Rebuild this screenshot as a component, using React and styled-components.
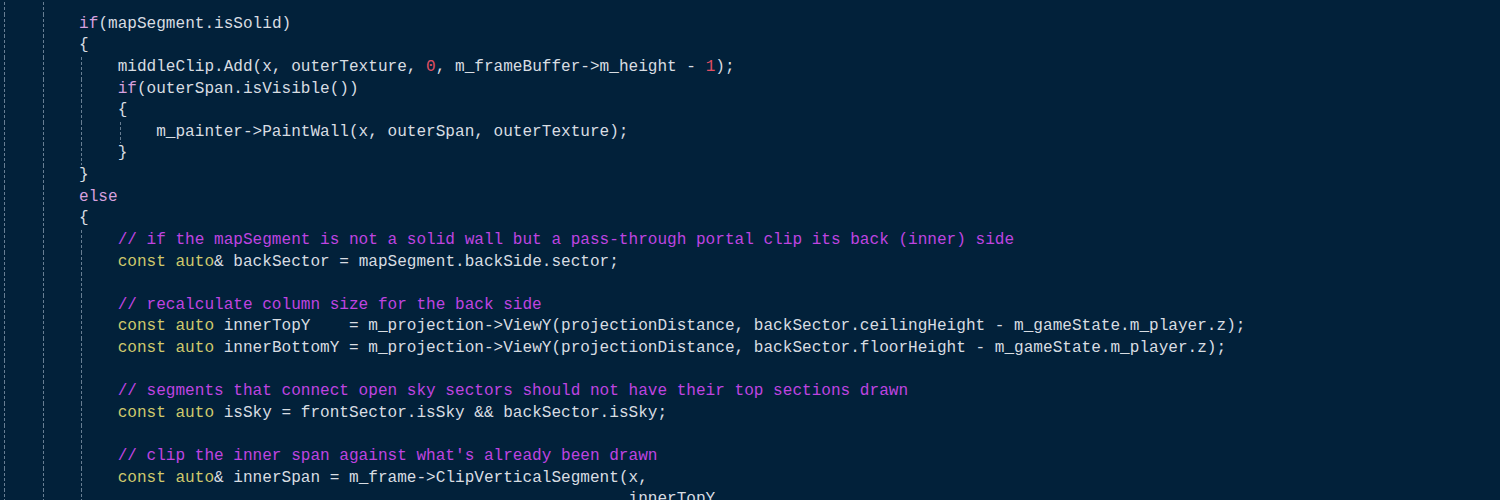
import React from 'react';
import styled, { createGlobalStyle } from 'styled-components';

const Global = createGlobalStyle`
  html, body { margin: 0; padding: 0; background: #02213a; }
  body { width: 1500px; height: 500px; overflow: hidden; }
`;

const Editor = styled.div`
  width: 1500px;
  height: 500px;
  overflow: hidden;
  background: #02213a;
  box-sizing: border-box;
  padding-left: 2px;
  font-family: "Liberation Mono", "DejaVu Sans Mono", monospace;
  font-size: 16.07px;
  color: #d8dde2;
`;

const Lines = styled.div`
  margin-top: -8px;
  display: flex;
  flex-direction: column;
`;

const Row = styled.div`
  display: flex;
  height: 21.64px;
  line-height: 21.64px;
  white-space: pre;
`;

const Indent = styled.span`
  flex: 0 0 4ch;
  width: 4ch;
  height: 100%;
  background: ${(p) =>
    p.$guide
      ? 'repeating-linear-gradient(to bottom, rgba(165, 182, 200, 0.62) 0 3px, transparent 3px 5px) 2px 0 / 1px 100% no-repeat'
      : 'none'};
`;

const colors = {
  kw: '#d7a0df',
  type: '#cfc96c',
  num: '#e04f63',
  cmt: '#bf44e0',
  plain: '#d8dde2',
};

const Tok = styled.span`
  color: ${(p) => colors[p.$kind] || colors.plain};
`;

const K = (t) => ['kw', t];
const T = (t) => ['type', t];
const N = (t) => ['num', t];
const C = (t) => ['cmt', t];
const P = (t) => ['plain', t];

const lines = [
  { units: 2, guides: 2, tokens: [] },
  { units: 2, guides: 2, tokens: [K('if'), P('(mapSegment.isSolid)')] },
  { units: 2, guides: 2, tokens: [P('{')] },
  {
    units: 3,
    guides: 3,
    tokens: [P('middleClip.Add(x, outerTexture, '), N('0'), P(', m_frameBuffer->m_height - '), N('1'), P(');')],
  },
  { units: 3, guides: 3, tokens: [K('if'), P('(outerSpan.isVisible())')] },
  { units: 3, guides: 3, tokens: [P('{')] },
  { units: 4, guides: 4, tokens: [P('m_painter->PaintWall(x, outerSpan, outerTexture);')] },
  { units: 3, guides: 3, tokens: [P('}')] },
  { units: 2, guides: 2, tokens: [P('}')] },
  { units: 2, guides: 2, tokens: [K('else')] },
  { units: 2, guides: 2, tokens: [P('{')] },
  {
    units: 3,
    guides: 3,
    tokens: [C('// if the mapSegment is not a solid wall but a pass-through portal clip its back (inner) side')],
  },
  {
    units: 3,
    guides: 3,
    tokens: [T('const'), P(' '), T('auto'), P('& backSector = mapSegment.backSide.sector;')],
  },
  { units: 3, guides: 3, tokens: [] },
  { units: 3, guides: 3, tokens: [C('// recalculate column size for the back side')] },
  {
    units: 3,
    guides: 3,
    tokens: [
      T('const'),
      P(' '),
      T('auto'),
      P(' innerTopY    = m_projection->ViewY(projectionDistance, backSector.ceilingHeight - m_gameState.m_player.z);'),
    ],
  },
  {
    units: 3,
    guides: 3,
    tokens: [
      T('const'),
      P(' '),
      T('auto'),
      P(' innerBottomY = m_projection->ViewY(projectionDistance, backSector.floorHeight - m_gameState.m_player.z);'),
    ],
  },
  { units: 3, guides: 3, tokens: [] },
  {
    units: 3,
    guides: 3,
    tokens: [C('// segments that connect open sky sectors should not have their top sections drawn')],
  },
  {
    units: 3,
    guides: 3,
    tokens: [T('const'), P(' '), T('auto'), P(' isSky = frontSector.isSky && backSector.isSky;')],
  },
  { units: 3, guides: 3, tokens: [] },
  { units: 3, guides: 3, tokens: [C("// clip the inner span against what's already been drawn")] },
  {
    units: 3,
    guides: 3,
    tokens: [T('const'), P(' '), T('auto'), P('& innerSpan = m_frame->ClipVerticalSegment(x,')],
  },
  { units: 3, guides: 3, tokens: [P(' '.repeat(53) + 'innerTopY,')] },
];

function CodeLine({ line }) {
  return (
    <Row>
      {Array.from({ length: line.units }, (_, i) => (
        <Indent key={i} $guide={i < line.guides} />
      ))}
      {line.tokens.map(([kind, text], i) => (
        <Tok key={i} $kind={kind}>
          {text}
        </Tok>
      ))}
    </Row>
  );
}

export default function App() {
  return (
    <>
      <Global />
      <Editor>
        <Lines>
          {lines.map((line, i) => (
            <CodeLine key={i} line={line} />
          ))}
        </Lines>
      </Editor>
    </>
  );
}
